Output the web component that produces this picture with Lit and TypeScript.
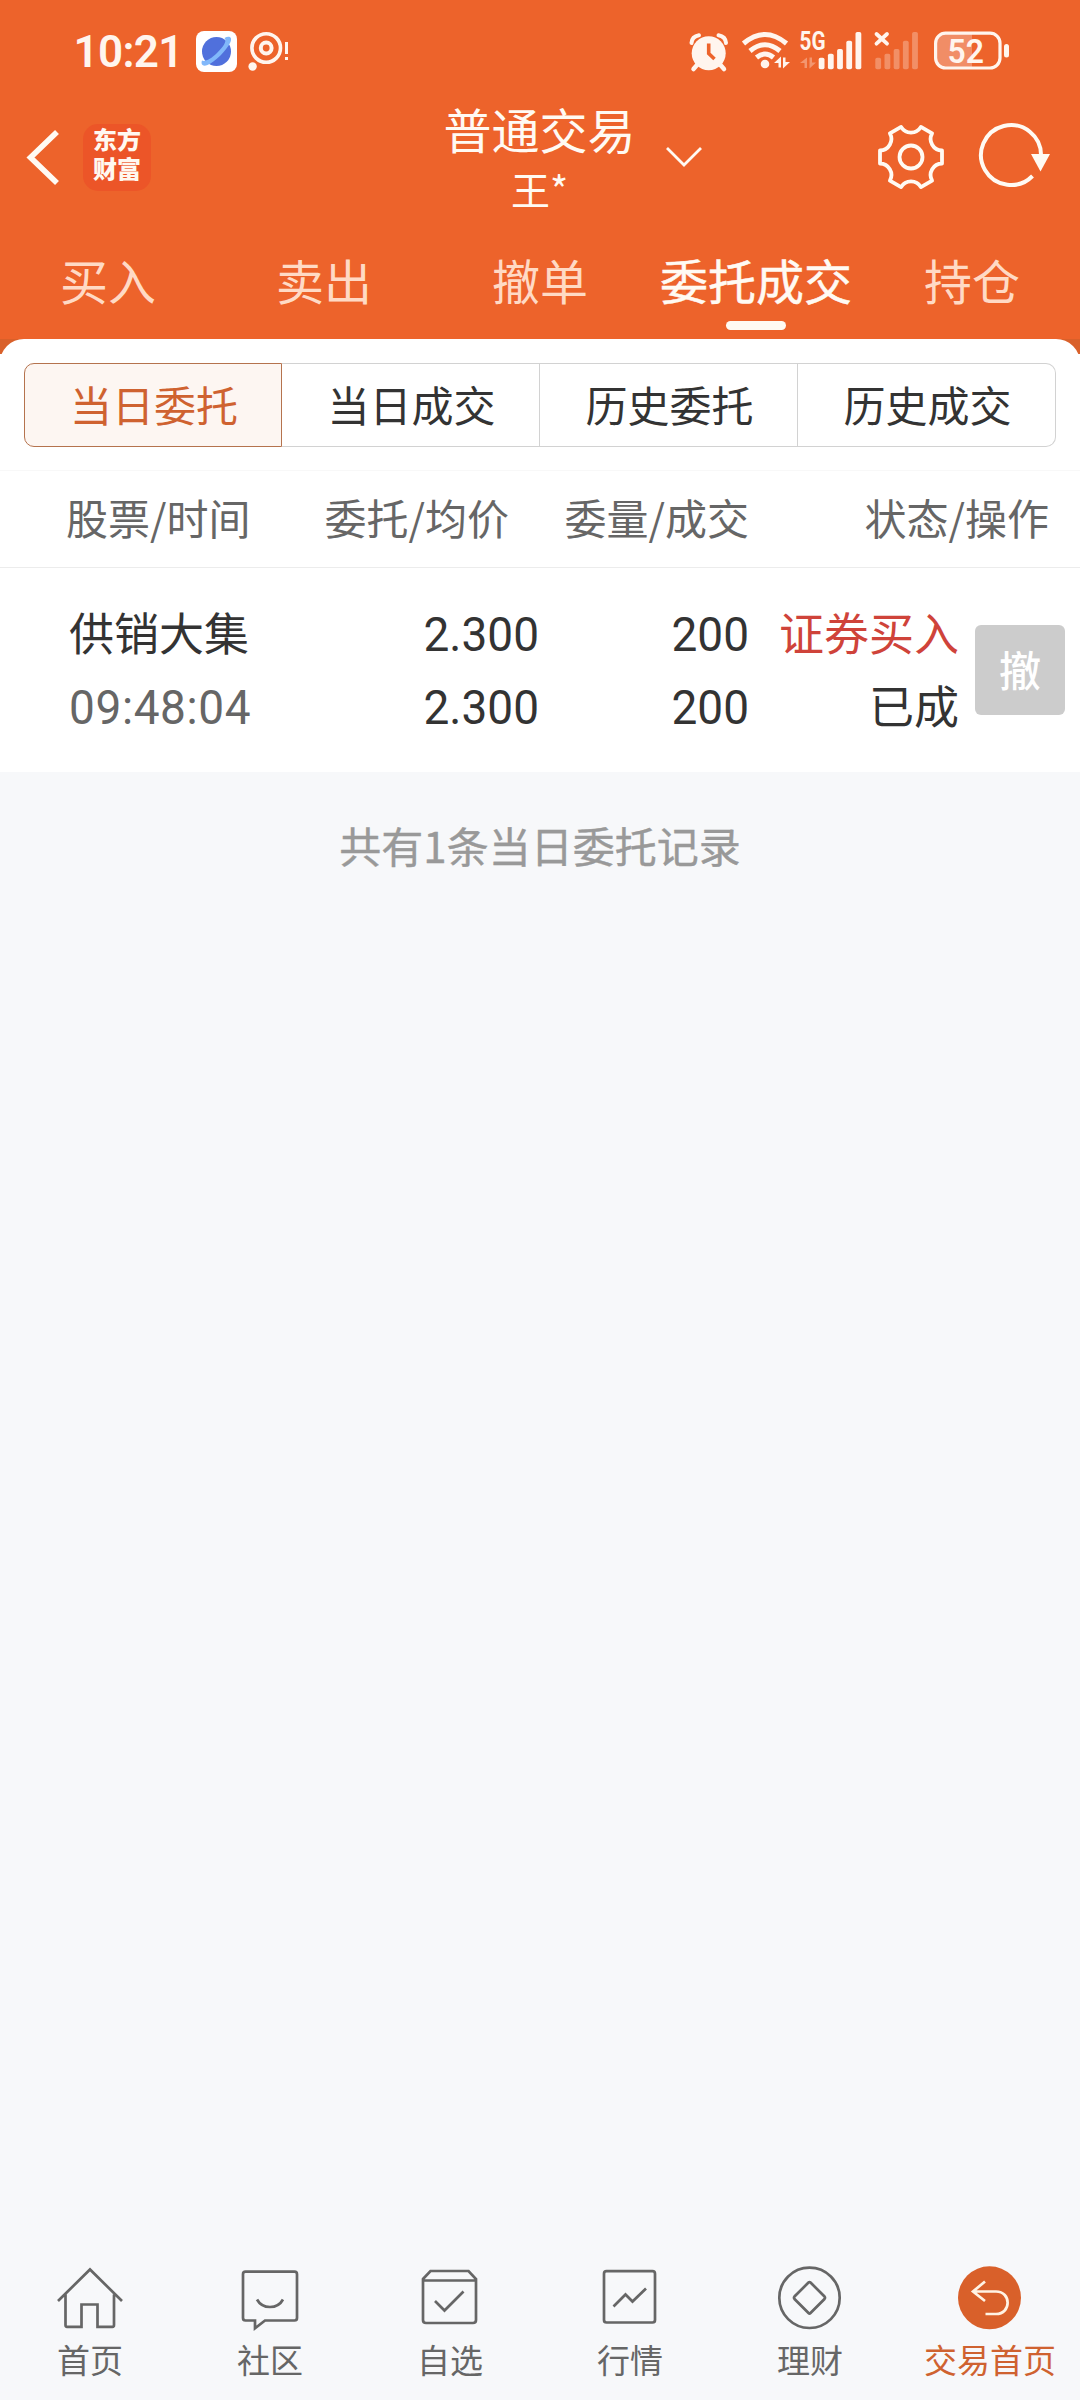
import { LitElement, html, css, svg } from "lit";
import { customElement, property } from "lit/decorators.js";
import { classMap } from "lit/directives/class-map.js";

@customElement("status-bar")
class StatusBar extends LitElement {
  static styles = css`
    :host { display: block; }
    .bar {
      display: flex; align-items: center; height: 102px; box-sizing: border-box;
      padding: 0 71px 0 74px; color: #fff5ee;
    }
    svg { display: block; flex: none; overflow: visible; }
    text { font-family: Roboto, "Liberation Sans", sans-serif; fill: #fff5ee; }
    .time { font-size: 44px; font-weight: 600; }
    .net { font-size: 26px; font-weight: 700; }
    .level { font-size: 34px; font-weight: 600; }
    .spacer { flex: 1; }
    .planet { margin-left: 15px; }
    .eye { margin-left: 10px; }
    .wifi { margin-left: 14px; }
    .sim { margin-left: 10px; }
    .sim2 { margin-left: 13px; }
    .battery { margin-left: 15px; }
  `;

  private bars(x: number) {
    const tops = [57.7, 53.7, 49, 40.7, 32];
    return tops.map(
      (y, i) => svg`<rect x=${x + i * 9.2} y=${y} width="5.8" height=${69.3 - y} rx="1.8"/>`
    );
  }

  render() {
    return html`
      <div class="bar">
        <svg width="107" height="44" viewBox="75 29 107 44">
          <text class="time" x="74.500" y="66.500" textLength="110" lengthAdjust="spacing">10:21</text>
        </svg>
        <svg class="planet" width="42" height="44" viewBox="197 29 42 44">
          <rect x="197" y="31" width="41" height="41" rx="8" fill="#fff"/>
          <circle cx="217.5" cy="51.5" r="14.5" fill="#5070dc"/>
          <path d="M203 60.500C201.500 64.500 204 67 208.500 65C216 62 228 50 231.500 42C233.500 37 230 35.500 225.500 38C228.500 41 224 47 218 53C212 59 206 62 203 60.500Z" fill="#81b8fa"/>
        </svg>
        <svg class="eye" width="41" height="44" viewBox="249 29 41 44" fill="none" stroke="#fff5ee">
          <circle cx="267.2" cy="48" r="14.3" stroke-width="3.6"/>
          <circle cx="267.2" cy="48" r="5.4" stroke-width="4"/>
          <circle cx="253.6" cy="66.5" r="4.2" fill="#fff5ee" stroke="none"/>
          <path d="M287.500 42V54M287.500 57V60" stroke-width="3"/>
        </svg>
        <div class="spacer"></div>
        <svg width="38" height="44" viewBox="690 29 38 44">
          <circle cx="708.7" cy="53.2" r="17" fill="#fff5ee"/>
          <path d="M691.500 43Q692 36.500 699 35.300M726 43Q725.500 36.500 718.500 35.300" fill="none" stroke="#fff5ee" stroke-width="4" stroke-linecap="round"/>
          <path d="M697 65L693.500 69M720.500 65L724 69" stroke="#fff5ee" stroke-width="4.500" stroke-linecap="round"/>
          <path d="M708.700 43.500V53.500L714.500 59" fill="none" stroke="#ed632b" stroke-width="3.600"/>
        </svg>
        <svg class="wifi" width="48" height="44" viewBox="742 29 48 44" fill="none" stroke="#fff5ee" stroke-width="5">
          <path d="M743.500 43.500Q765 25.500 786.500 43.500M750 51Q765 38.500 780 51"/>
          <path d="M756.500 57.500Q765 50.500 773.500 57.500"/>
          <circle cx="765" cy="64" r="4.3" fill="#fff5ee" stroke="none"/>
          <path d="M774 63L781 56.500V67.500H778.500V63ZM790 62L783 68.500V57.500H785.500V62Z" fill="#fff5ee" stroke="none"/>
        </svg>
        <svg class="sim" width="62" height="44" viewBox="800 29 62 44" fill="#fff5ee">
          <text class="net" x="799.5" y="50" textLength="26" lengthAdjust="spacingAndGlyphs">5G</text>
          <path d="M800 63L807 57.500V68H804.500V63ZM816 62.500L809.500 68.500V57.500H812V62.500Z" opacity=".35"/>
          ${this.bars(818.7)}
        </svg>
        <svg class="sim2" width="44" height="44" viewBox="875 29 44 44" fill="#fff5ee">
          <path d="M876.500 34L887 43.700M887 34L876.500 43.700" stroke="#fff5ee" stroke-width="3.800" stroke-linecap="round"/>
          <g opacity=".3">${this.bars(875.3)}</g>
        </svg>
        <svg class="battery" width="75" height="44" viewBox="934 29 75 44">
          <path d="M972 33V69H945Q935.500 69 935.500 59V43Q935.500 33 945 33Z" fill="#f18d66"/>
          <rect x="935.6" y="33.2" width="64.400" height="34.800" rx="10" fill="none" stroke="#fff5ee" stroke-width="3.200"/>
          <rect x="1004" y="44" width="5" height="13.500" rx="2.500" fill="#fff5ee"/>
          <text class="level" x="947.5" y="62.800" textLength="36.500" lengthAdjust="spacingAndGlyphs">52</text>
        </svg>
      </div>
    `;
  }
}

@customElement("app-header")
class AppHeader extends LitElement {
  static styles = css`
    :host { display: block; color: #fffaf3; }
    .row {
      display: grid; grid-template-columns: 1fr auto 1fr; align-items: start;
      height: 135px; box-sizing: border-box; padding: 0 28px 0 27px;
    }
    svg { display: block; flex: none; overflow: visible; }
    .left { display: flex; align-items: center; height: 110px; gap: 23px; }
    .logo {
      width: 68px; height: 67px; border-radius: 15px; background: #ec5528; color: #fff8f0;
      display: flex; flex-direction: column; align-items: center;
      font-size: 24px; line-height: 29px; font-weight: 900;
    }
    .mid { width: 192px; display: flex; flex-direction: column; align-items: center; margin-top: -4px; }
    .title { font-size: 48px; line-height: 60px; white-space: nowrap; }
    .sub { font-size: 39px; line-height: 46px; margin-top: 7px; }
    .right { display: flex; align-items: center; height: 110px; }
    .down { margin-left: 29px; }
    .gear { margin-left: auto; }
    .refresh { margin-left: 34px; }
    .tabs { display: grid; grid-template-columns: repeat(5, 216px); height: 102px; }
    .tab { display: flex; flex-direction: column; align-items: center; font-size: 48px; line-height: 60px; padding-top: 12px; color: #ffdac5; }
    .tab.on { color: #fffaf3; -webkit-text-stroke: 0.500px #fffaf3; }
    .mark { width: 60px; height: 9px; border-radius: 5px; background: #fffaf3; margin-top: 12px; }
  `;

  private tabs = ["买入", "卖出", "撤单", "委托成交", "持仓"];

  render() {
    return html`
      <div class="row">
        <div class="left">
          <svg width="33" height="56" viewBox="26 129 33 56" fill="none" stroke="#fffaf3" stroke-width="5.600">
            <path d="M56 132L29.500 157.500L56 183"/>
          </svg>
          <div class="logo">东方<br>财富</div>
        </div>
        <div class="mid">
          <div class="title">普通交易</div>
          <div class="sub">王*</div>
        </div>
        <div class="right">
          <svg class="down" width="38" height="22" viewBox="665 146 38 22" fill="none" stroke="#fffaf3" stroke-width="2.800">
            <path d="M667 148L684 165L701 148"/>
          </svg>
          <svg class="gear" width="66" height="66" viewBox="-32 -33 66 66" fill="none" stroke="#fffaf3" stroke-width="3.800" stroke-linejoin="round">
            <path d="M31 -6.500V6.500A11.500 11.500 0 0 0 21.100 23.600L9.900 30.100A11.500 11.500 0 0 0 -9.900 30.100L-21.100 23.600A11.500 11.500 0 0 0 -31 6.500V-6.500A11.500 11.500 0 0 0 -21.100 -23.600L-9.900 -30.100A11.500 11.500 0 0 0 9.900 -30.100L21.100 -23.600A11.500 11.500 0 0 0 31 -6.500Z"/>
            <circle r="11.500"/>
          </svg>
          <svg class="refresh" width="73" height="66" viewBox="979 124 73 66">
            <path d="M1032.500 176A30 30 0 1 1 1041 156" fill="none" stroke="#fffaf3" stroke-width="4"/>
            <path d="M1031 154H1050L1040.500 171.500Z" fill="#fffaf3"/>
          </svg>
        </div>
      </div>
      <div class="tabs">
        ${this.tabs.map((t) => {
          const on = t === "委托成交";
          return html`<div class=${classMap({ tab: true, on })}>${t}${on ? html`<div class="mark"></div>` : ""}</div>`;
        })}
      </div>
    `;
  }
}

@customElement("order-panel")
class OrderPanel extends LitElement {
  static styles = css`
    :host { display: block; background: linear-gradient(#d9602a 15px, #fff 15px); }
    .sheet { background: #fff; border-radius: 24px 24px 0 0; padding-top: 24px; }
    .segs { display: grid; grid-template-columns: repeat(4, 258px); margin: 0 24px; height: 84px; }
    .seg {
      box-sizing: border-box; border: 1px solid #d2d2d2; border-left-width: 0;
      display: flex; align-items: center; justify-content: center;
      font-size: 42px; line-height: 80px; color: #333; padding: 0 0 2px 2px;
    }
    .seg.on { border: 1px solid #b5734e; border-radius: 10px 0 0 10px; background: #fdf6f2; color: #cf6230; }
    .seg:last-child { border-radius: 0 10px 10px 0; }
    .head {
      display: grid; grid-template-columns: 190px 253px 240px 300px; height: 98px; box-sizing: border-box;
      border-top: 1px solid #f8f8f8; border-bottom: 1px solid #ececec; margin-top: 23px;
      padding-left: 66px; font-size: 42px; line-height: 92px; color: #666; text-align: right; white-space: nowrap;
    }
    .head .first { text-align: left; }
    .row {
      display: grid; grid-template-columns: 200px 270px 210px 210px 90px; height: 204px; box-sizing: border-box;
      padding: 27px 15px 0 69px; font-size: 45px; line-height: 73px; color: #333; text-align: right;
    }
    .cell { white-space: nowrap; }
    .cell.name { text-align: left; }
    .num {
      display: block; height: 73px; font-family: Roboto, "Liberation Sans", sans-serif; font-size: 46px;
      transform: translateY(3px) scaleY(1.055);
    }
    .time { color: #666; letter-spacing: 0.600px; }
    .line { height: 73px; }
    .buy { color: #cf433a; }
    .cancel {
      width: 90px; height: 90px; margin: 30px 0 0 16px; border-radius: 6px; background: #ccc; color: #fff;
      font-size: 42px; font-weight: 500; line-height: 87px; text-align: center;
    }
  `;

  private segs = ["当日委托", "当日成交", "历史委托", "历史成交"];

  render() {
    return html`
      <div class="sheet">
        <div class="segs">
          ${this.segs.map((s, i) => html`<div class=${classMap({ seg: true, on: i === 0 })}>${s}</div>`)}
        </div>
        <div class="head">
          <span class="first">股票/时间</span><span>委托/均价</span><span>委量/成交</span><span>状态/操作</span>
        </div>
        <div class="row">
          <div class="cell name"><div class="line">供销大集</div><span class="num time">09:48:04</span></div>
          <div class="cell"><span class="num">2.300</span><span class="num">2.300</span></div>
          <div class="cell"><span class="num">200</span><span class="num">200</span></div>
          <div class="cell"><div class="line buy">证券买入</div><div class="line">已成</div></div>
          <div class="cancel">撤</div>
        </div>
      </div>
    `;
  }
}

const icons: Record<string, unknown> = {
  home: svg`<path d="M-32 7L0 -24.500L32 7M-24.500 0.500V31Q-24.500 32.800 -23 32.800H-8.500V10.500H7.500V32.800H22.500Q24 32.800 24 31V0.500"/>`,
  chat: svg`<path d="M-24.500 -22.300H24.500Q27 -22.300 27 -19.800V24Q27 26.500 24.500 26.500H-5L-15 34.300V26.500H-24.500Q-27 26.500 -27 24V-19.800Q-27 -22.300 -24.500 -22.300ZM-13 5.500C-7.500 15.500 7.500 15.500 13 5.500"/>`,
  box: svg`<path d="M-27 -15L-19.500 -23H18.500L26 -15V26Q26 29 23 29H-24Q-27 29 -27 26ZM-27 -13.500H26M-15 7L-5.500 16.500L13.500 -2.500"/>`,
  chart: svg`<rect x="-26" y="-22.800" width="51" height="51.300" rx="2.500"/><path d="M-16.500 12.500L-4.500 0.500L2.500 7.500L16 -5.500"/>`,
  coin: svg`<circle cx="-0.500" cy="3.800" r="30.200"/><path d="M-1.500 -11.500Q-0.500 -12.500 0.500 -11.500L14.500 2.500Q15.500 3.800 14.500 5L0.500 19Q-0.500 20 -1.500 19L-15.500 5Q-16.500 3.800 -15.500 2.500Z"/>`,
  back: svg`<circle cx="-0.500" cy="3.800" r="31.500" fill="#d9602a" stroke="none"/><path d="M-5 -12.500L-17 -2.500L-5 7M-17 -2.500H6C21.500 -2.500 21.500 20 6 20H-4.500" stroke="#fff3e4"/>`,
};

@customElement("nav-item")
class NavItem extends LitElement {
  @property() icon = "";
  @property() label = "";
  @property({ type: Boolean }) active = false;

  static styles = css`
    :host { display: block; }
    .item { display: flex; flex-direction: column; align-items: center; color: #666; }
    .item.on { color: #cf6230; }
    svg { display: block; overflow: visible; fill: none; stroke: #666; stroke-width: 2.700; }
    .label { font-size: 33px; line-height: 44px; margin-top: 7px; white-space: nowrap; }
  `;

  render() {
    return html`
      <div class=${classMap({ item: true, on: this.active })}>
        <svg width="66" height="66" viewBox="-33 -30 66 66">${icons[this.icon]}</svg>
        <div class="label">${this.label}</div>
      </div>
    `;
  }
}

@customElement("app-root")
class AppRoot extends LitElement {
  static styles = css`
    :host {
      display: flex; flex-direction: column; width: 1080px; height: 2400px; overflow: hidden;
      background: #f7f8fa; font-family: "Noto Sans CJK SC", sans-serif;
    }
    .top { background: #ed632b; height: 339px; flex: none; }
    .note { flex: 1; padding-top: 43px; text-align: center; font-size: 42px; line-height: 60px; color: #999; -webkit-text-stroke: 0.400px #999; }
    .nav { display: grid; grid-template-columns: repeat(6, 180px); height: 136px; }
  `;

  render() {
    return html`
      <div class="top"><status-bar></status-bar><app-header></app-header></div>
      <order-panel></order-panel>
      <div class="note">共有1条当日委托记录</div>
      <div class="nav">
        <nav-item icon="home" label="首页"></nav-item>
        <nav-item icon="chat" label="社区"></nav-item>
        <nav-item icon="box" label="自选"></nav-item>
        <nav-item icon="chart" label="行情"></nav-item>
        <nav-item icon="coin" label="理财"></nav-item>
        <nav-item icon="back" label="交易首页" active></nav-item>
      </div>
    `;
  }
}
